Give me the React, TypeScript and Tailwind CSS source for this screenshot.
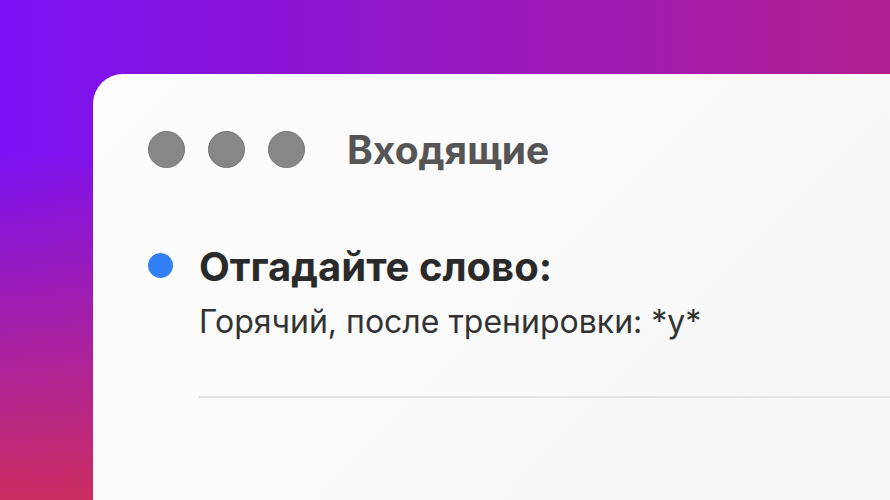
export default function App() {
  return (
    <div
      className="w-[890px] h-[500px] overflow-hidden bg-[linear-gradient(to_bottom,rgba(210,48,84,0)_30%,rgba(210,48,84,0.92)_100%),linear-gradient(to_right,#7a10f5,#b12090)] pt-[74px] pl-[93px]"
      style={{ fontFamily: 'Inter, "Noto Sans", sans-serif' }}
    >
      <div className="w-[830px] h-[460px] rounded-tl-[30px] bg-[linear-gradient(135deg,#fdfdfd,#f6f6f6)]">
        <div className="flex items-center pt-[56px] pl-[55px]">
          <div className="flex gap-[23px]">
            <span className="w-[37px] h-[37px] rounded-full bg-[#878787] border border-[#767676]" />
            <span className="w-[37px] h-[37px] rounded-full bg-[#878787] border border-[#767676]" />
            <span className="w-[37px] h-[37px] rounded-full bg-[#878787] border border-[#767676]" />
          </div>
          <div className="ml-[42px] text-[39px] font-bold text-[#555555] leading-none">Входящие</div>
        </div>
        <div className="flex pt-[78px] pl-[55px]">
          <span className="mt-[6px] w-[25px] h-[25px] rounded-full bg-[#3380f6]" />
          <div className="ml-[26px] flex-1">
            <div className="text-[40px] font-bold text-[#2a2a2a] leading-none">Отгадайте слово:</div>
            <div className="mt-[19px] text-[32px] text-[#333333] leading-none">Горячий, после тренировки: *у*</div>
            <div className="mt-[58px] h-[2px] bg-[#e4e4e4]" />
          </div>
        </div>
      </div>
    </div>
  );
}
